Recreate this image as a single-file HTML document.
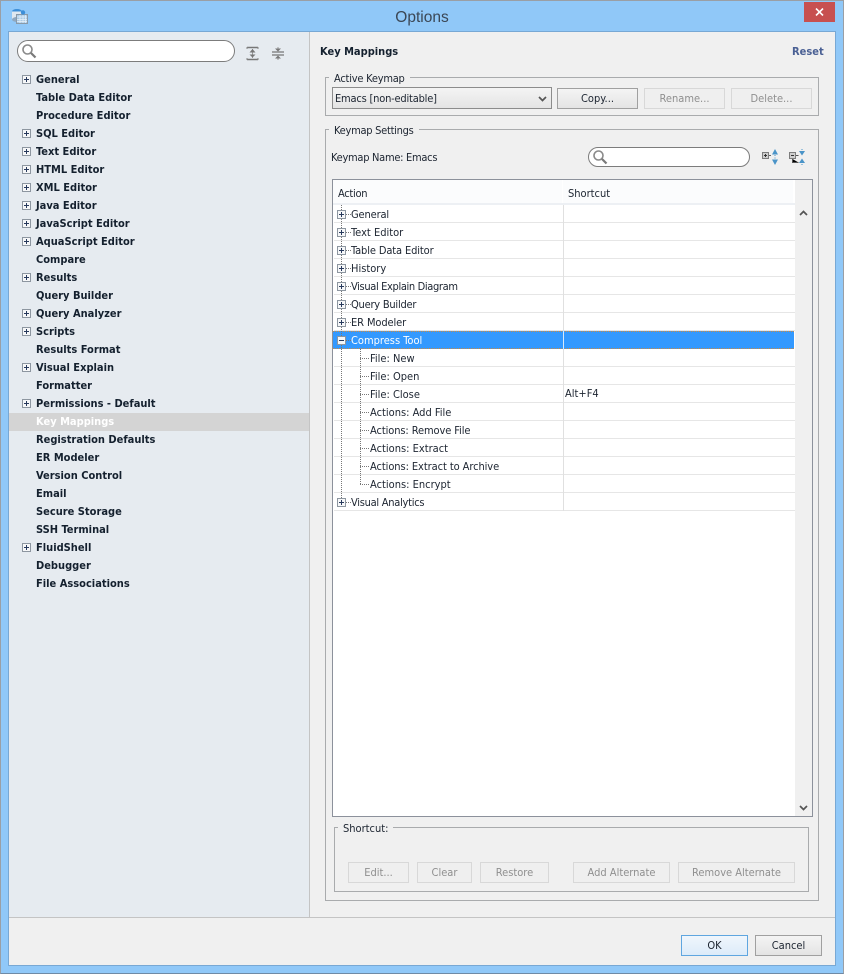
<!DOCTYPE html>
<html><head><meta charset="utf-8"><title>Options</title>
<style>
html,body{margin:0;padding:0;width:844px;height:974px;overflow:hidden;background:#90c8f8}
*{box-sizing:border-box}
body{position:relative;font-family:"DejaVu Sans Condensed","DejaVu Sans","Liberation Sans",sans-serif;font-stretch:condensed;font-size:11px;color:#1c2430}
.a,.t,.b,.l{position:absolute}
.t,.l{white-space:nowrap;line-height:20px;height:20px}
.l{left:36px;font-weight:bold;color:#14202e;font-size:11px}
.b{height:21px;line-height:19px;text-align:center;border:1px solid #adadad;background:#efefef;color:#8f8f8f}
.g{position:absolute;border:1px solid #a9abad}
.lg{position:absolute;background:#f0f0f0;padding:0 5px;line-height:16px;height:14px;white-space:nowrap}
.row{position:absolute;left:334px;width:461px;height:18px;border-bottom:1px solid #e6e6e6}
.x{position:absolute;width:9px;height:9px;border:1px solid #8d96a0;background:#f6f7f8}
.x:before{content:"";position:absolute;left:1px;top:3px;width:5px;height:1px;background:#27395c}
.x.p:after{content:"";position:absolute;left:3px;top:1px;width:1px;height:5px;background:#27395c}
</style></head><body>
<div class="a" style="left:0;top:0;width:844px;height:974px;border:1px solid #9a9fa5;border-bottom-color:#6f8aa5"></div>
<svg class="a" style="left:11px;top:8px" width="17" height="17" viewBox="0 0 17 17"><ellipse cx="6" cy="3.500" rx="5" ry="2.500" fill="#3d8fd8"/><rect x="1" y="3.500" width="10" height="8" fill="#dfe8f0"/><ellipse cx="6" cy="11.500" rx="5" ry="2.500" fill="#8fa8c0"/><rect x="5.500" y="6.500" width="11" height="9" fill="#a9c9e4" stroke="#8a9aa8"/><path d="M6 9h10M6 11.500h10M6 13.500h10M9 7v8M12 7v8M14.500 7v8" stroke="#e8f2fa" stroke-width=".7"/><circle cx="12" cy="4.500" r="2.200" fill="#3d8fd8"/></svg>
<div class="t" style="left:322px;width:200px;text-align:center;top:7px;height:22px;line-height:22px;font-size:15.500px;color:#3b4755;font-family:'Liberation Sans',sans-serif;font-stretch:normal">Options</div>
<div class="a" style="left:804px;top:2px;width:31px;height:20px;background:#c75050"></div>
<svg class="a" style="left:815px;top:8px" width="9" height="8" viewBox="0 0 9 8"><path d="M1 .5L8 7.500M8 .5L1 7.500" stroke="#fff" stroke-width="1.600"/></svg>

<div class="a" style="left:8px;top:31px;width:828px;height:935px;background:#f0f0f0;border:1px solid #78a8d4"></div>
<div class="a" style="left:9px;top:32px;width:300px;height:885px;background:#e6ebf0"></div>
<div class="a" style="left:309px;top:32px;width:1px;height:885px;background:#c4c4c4"></div>
<div class="a" style="left:9px;top:917px;width:826px;height:1px;background:#c4c4c4"></div>

<div class="a" style="left:17px;top:40px;width:218px;height:22px;border:1px solid #7c7c7c;border-radius:11px;background:#fff"></div>
<svg class="a" style="left:21px;top:43px" width="16" height="16" viewBox="0 0 16 16"><circle cx="6.500" cy="6.500" r="4.500" fill="none" stroke="#8a8a8a" stroke-width="1.600"/><path d="M10 10l4.500 4.500" stroke="#7a7a7a" stroke-width="2.200"/></svg>
<svg class="a" style="left:246px;top:46px" width="14" height="15" viewBox="0 0 14 15"><path d="M1 1.500h11M1 13.500h11" stroke="#777" stroke-width="1.400"/><path d="M1 1v2M12 1v2M1 12v2M12 12v2" stroke="#888"/><path d="M6.500 3v9" stroke="#999"/><path d="M3.500 6.500h6L6.500 3zM3.500 8.500h6L6.500 11.500z" fill="#777"/></svg>
<svg class="a" style="left:271px;top:46px" width="15" height="15" viewBox="0 0 15 15"><path d="M1 6h12M1 9h12" stroke="#777" stroke-width="1.200"/><path d="M7 1v4M7 10v4" stroke="#999"/><path d="M4 2.500h6L7 5.500zM4 12.500h6L7 9.500z" fill="#777"/></svg>

<div class="a" style="left:9px;top:413px;width:300px;height:18px;background:#d4d4d4"></div>
<div class="l" style="top:70px">General</div>
<div class="l" style="top:88px">Table Data Editor</div>
<div class="l" style="top:106px">Procedure Editor</div>
<div class="l" style="top:124px">SQL Editor</div>
<div class="l" style="top:142px">Text Editor</div>
<div class="l" style="top:160px">HTML Editor</div>
<div class="l" style="top:178px">XML Editor</div>
<div class="l" style="top:196px">Java Editor</div>
<div class="l" style="top:214px">JavaScript Editor</div>
<div class="l" style="top:232px">AquaScript Editor</div>
<div class="l" style="top:250px">Compare</div>
<div class="l" style="top:268px">Results</div>
<div class="l" style="top:286px">Query Builder</div>
<div class="l" style="top:304px">Query Analyzer</div>
<div class="l" style="top:322px">Scripts</div>
<div class="l" style="top:340px">Results Format</div>
<div class="l" style="top:358px">Visual Explain</div>
<div class="l" style="top:376px">Formatter</div>
<div class="l" style="top:394px">Permissions - Default</div>
<div class="l" style="top:412px;color:#fff">Key Mappings</div>
<div class="l" style="top:430px">Registration Defaults</div>
<div class="l" style="top:448px">ER Modeler</div>
<div class="l" style="top:466px">Version Control</div>
<div class="l" style="top:484px">Email</div>
<div class="l" style="top:502px">Secure Storage</div>
<div class="l" style="top:520px">SSH Terminal</div>
<div class="l" style="top:538px">FluidShell</div>
<div class="l" style="top:556px">Debugger</div>
<div class="l" style="top:574px">File Associations</div>
<div class="x p" style="left:22px;top:75px"></div>
<div class="x p" style="left:22px;top:129px"></div>
<div class="x p" style="left:22px;top:147px"></div>
<div class="x p" style="left:22px;top:165px"></div>
<div class="x p" style="left:22px;top:183px"></div>
<div class="x p" style="left:22px;top:201px"></div>
<div class="x p" style="left:22px;top:219px"></div>
<div class="x p" style="left:22px;top:237px"></div>
<div class="x p" style="left:22px;top:273px"></div>
<div class="x p" style="left:22px;top:309px"></div>
<div class="x p" style="left:22px;top:327px"></div>
<div class="x p" style="left:22px;top:363px"></div>
<div class="x p" style="left:22px;top:399px"></div>
<div class="x p" style="left:22px;top:543px"></div>

<div class="t" style="left:320px;top:42px;font-weight:bold;color:#14202e">Key Mappings</div>
<div class="t" style="left:792px;top:42px;font-weight:bold;color:#4a6094">Reset</div>

<div class="g" style="left:325px;top:77px;width:494px;height:39px"></div>
<div class="lg" style="left:329px;top:71px;letter-spacing:-.23px">Active Keymap</div>
<div class="a" style="left:332px;top:87px;width:220px;height:22px;border:1px solid #8c8c8c;background:linear-gradient(#f4f4f4,#e4e4e4)"></div>
<div class="t" style="left:335px;top:89px;letter-spacing:-.2px">Emacs [non-editable]</div>
<svg class="a" style="left:538px;top:96px" width="9" height="6" viewBox="0 0 9 6"><path d="M1 1l3.500 3.500L8 1" fill="none" stroke="#555" stroke-width="1.700"/></svg>
<div class="b" style="left:557px;top:88px;width:81px;border-color:#a0a0a0;color:#1c2430;background:linear-gradient(#f4f4f4,#e4e4e4)">Copy...</div>
<div class="b" style="left:644px;top:88px;width:81px;border-color:#d8d8d8">Rename...</div>
<div class="b" style="left:731px;top:88px;width:81px;border-color:#d8d8d8">Delete...</div>

<div class="g" style="left:325px;top:129px;width:494px;height:772px"></div>
<div class="lg" style="left:329px;top:123px;letter-spacing:-.27px">Keymap Settings</div>
<div class="t" style="left:331px;top:148px;letter-spacing:-.28px">Keymap Name: Emacs</div>
<div class="a" style="left:588px;top:147px;width:162px;height:20px;border:1px solid #7c7c7c;border-radius:10px;background:#fff"></div>
<svg class="a" style="left:592px;top:149px" width="16" height="16" viewBox="0 0 16 16"><circle cx="6.500" cy="6.500" r="4.500" fill="none" stroke="#8a8a8a" stroke-width="1.600"/><path d="M10 10l4.500 4.500" stroke="#7a7a7a" stroke-width="2.200"/></svg>
<svg class="a" style="left:761px;top:148px" width="18" height="18" viewBox="0 0 18 18"><rect x="1.500" y="4.500" width="6" height="6" fill="#cfcfcf" stroke="#7d7d7d"/><path d="M3 7.500h3M4.500 6v3" stroke="#333"/><path d="M8 7.500h2" stroke="#666"/><path d="M11 6.500h6L14 1zM11 11.500h6L14 17z" fill="#4a94c8"/><path d="M14 7v1M14 9.500v1" stroke="#4a94c8"/></svg>
<svg class="a" style="left:788px;top:148px" width="18" height="19" viewBox="0 0 18 19"><rect x="1.500" y="4.500" width="6" height="6" fill="#cfcfcf" stroke="#7d7d7d"/><path d="M3 7.500h3" stroke="#333"/><path d="M8 7.500h2.500M4.500 11v3.500h6" stroke="#555"/><path d="M11 3h6l-3 4.500zM11 15l3-4.500 3 4.500z" fill="#4a94c8"/><path d="M14 1v1M14 16v1" stroke="#4a94c8"/></svg>

<div class="a" style="left:332px;top:179px;width:481px;height:638px;border:1px solid #8c919b;background:#fff"></div>
<div class="a" style="left:333px;top:180px;width:229px;height:23px;background:#fbfcfd"></div>
<div class="a" style="left:563px;top:180px;width:230px;height:23px;background:#fbfcfd"></div>
<div class="a" style="left:333px;top:203px;width:462px;height:2px;background:#edf0f4"></div>
<div class="a" style="left:795px;top:180px;width:17px;height:636px;background:#f0f0f0"></div>
<div class="t" style="left:338px;top:184px;letter-spacing:-.3px">Action</div>
<div class="t" style="left:568px;top:184px">Shortcut</div>
<svg class="a" style="left:799px;top:210px" width="9" height="6" viewBox="0 0 9 6"><path d="M1 5l3.500-3.500L8 5" fill="none" stroke="#555" stroke-width="1.700"/></svg>
<svg class="a" style="left:799px;top:805px" width="9" height="6" viewBox="0 0 9 6"><path d="M1 1l3.500 3.500L8 1" fill="none" stroke="#555" stroke-width="1.700"/></svg>

<div class="row" style="top:205px"></div><div class="row" style="top:223px"></div><div class="row" style="top:241px"></div><div class="row" style="top:259px"></div><div class="row" style="top:277px"></div><div class="row" style="top:295px"></div><div class="row" style="top:313px"></div>
<div class="row" style="top:349px"></div><div class="row" style="top:367px"></div><div class="row" style="top:385px"></div><div class="row" style="top:403px"></div><div class="row" style="top:421px"></div><div class="row" style="top:439px"></div><div class="row" style="top:457px"></div><div class="row" style="top:475px"></div><div class="row" style="top:493px"></div>
<div class="a" style="left:563px;top:205px;width:1px;height:306px;background:#e0e0e0"></div>
<div class="a" style="left:333px;top:331px;width:461px;height:18px;background:#3399ff;border-top:1px dotted #c98a45;border-bottom:1px dotted #c98a45"></div>
<div class="a" style="left:563px;top:331px;width:1px;height:18px;background:#d8e8f8"></div>

<svg class="a" style="left:333px;top:205px" width="50" height="300" viewBox="0 0 50 300" fill="none" stroke="#777" stroke-dasharray="1 1"><path d="M8.500 0V297"/><path d="M13 9.500h5M13 27.500h5M13 45.500h5M13 63.500h5M13 81.500h5M13 99.500h5M13 117.500h5M13 135.500h5M13 297.500h5"/><path d="M27.500 144V279.500"/><path d="M27 153.500h10M27 171.500h10M27 189.500h10M27 207.500h10M27 225.500h10M27 243.500h10M27 261.500h10M27 279.500h10"/></svg>

<div class="x p" style="left:337px;top:210px"></div>
<div class="x p" style="left:337px;top:228px"></div>
<div class="x p" style="left:337px;top:246px"></div>
<div class="x p" style="left:337px;top:264px"></div>
<div class="x p" style="left:337px;top:282px"></div>
<div class="x p" style="left:337px;top:300px"></div>
<div class="x p" style="left:337px;top:318px"></div>
<div class="x" style="left:337px;top:336px"></div>
<div class="x p" style="left:337px;top:498px"></div>

<div class="t" style="left:351px;top:205px;letter-spacing:-.14px">General</div>
<div class="t" style="left:351px;top:223px">Text Editor</div>
<div class="t" style="left:351px;top:241px;letter-spacing:-.12px">Table Data Editor</div>
<div class="t" style="left:351px;top:259px">History</div>
<div class="t" style="left:351px;top:277px;letter-spacing:-.36px">Visual Explain Diagram</div>
<div class="t" style="left:351px;top:295px;letter-spacing:-.23px">Query Builder</div>
<div class="t" style="left:351px;top:313px;letter-spacing:-.1px">ER Modeler</div>
<div class="t" style="left:351px;top:331px;color:#fff">Compress Tool</div>
<div class="t" style="left:370px;top:349px">File: New</div>
<div class="t" style="left:370px;top:367px">File: Open</div>
<div class="t" style="left:370px;top:385px">File: Close</div>
<div class="t" style="left:565px;top:384px">Alt+F4</div>
<div class="t" style="left:370px;top:403px">Actions: Add File</div>
<div class="t" style="left:370px;top:421px;letter-spacing:-.1px">Actions: Remove File</div>
<div class="t" style="left:370px;top:439px">Actions: Extract</div>
<div class="t" style="left:370px;top:457px;letter-spacing:-.08px">Actions: Extract to Archive</div>
<div class="t" style="left:370px;top:475px">Actions: Encrypt</div>
<div class="t" style="left:351px;top:493px;letter-spacing:-.27px">Visual Analytics</div>

<div class="g" style="left:334px;top:827px;width:475px;height:65px"></div>
<div class="lg" style="left:338px;top:821px">Shortcut:</div>
<div class="b" style="left:348px;top:862px;width:61px;border-color:#d8d8d8">Edit...</div>
<div class="b" style="left:417px;top:862px;width:55px;border-color:#d8d8d8">Clear</div>
<div class="b" style="left:480px;top:862px;width:69px;border-color:#d8d8d8">Restore</div>
<div class="b" style="left:573px;top:862px;width:97px;border-color:#d8d8d8">Add Alternate</div>
<div class="b" style="left:678px;top:862px;width:117px;border-color:#d8d8d8">Remove Alternate</div>

<div class="b" style="left:681px;top:935px;width:67px;border-color:#5fa6e0;color:#1c2430;background:linear-gradient(#f0f6fc,#dcebf9)">OK</div>
<div class="b" style="left:755px;top:935px;width:67px;border-color:#a0a0a0;color:#1c2430;background:linear-gradient(#f4f4f4,#e4e4e4)">Cancel</div>
</body></html>
